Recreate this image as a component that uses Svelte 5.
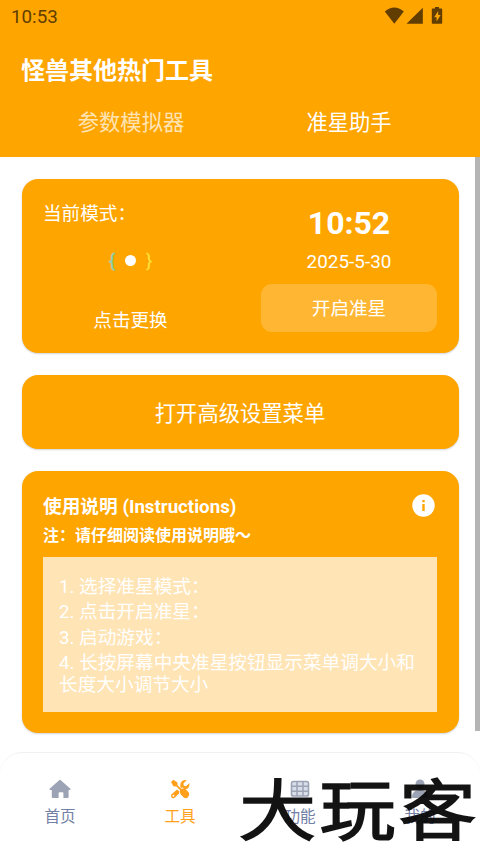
<script lang="ts">
  const topTabs = ['参数模拟器', '准星助手'];
  let activeTop = $state(1);

  const steps = [
    '1. 选择准星模式：',
    '2. 点击开启准星：',
    '3. 启动游戏：',
    '4. 长按屏幕中央准星按钮显示菜单调大小和长度大小调节大小',
  ];

  const navItems = [
    { id: 'home', label: '首页' },
    { id: 'tools', label: '工具' },
    { id: 'features', label: '功能' },
    { id: 'me', label: '我的' },
  ];
  let activeNav = $state('tools');
</script>

<div class="screen">
  <header>
    <div class="status">
      <span>10:53</span>
      <svg width="60" height="20" viewBox="0 0 60 20" fill="#613d00">
        <path d="M0.8 4.4Q10.3 -3.6 19.8 4.4L10.3 16.8Z" />
        <path d="M22.5 16.8L38.8 0.8V16.8Z" />
        <path d="M51 0h4v1.400h2.400q.8 0 .8.8v13.800q0 .8-.8.8h-8.800q-.8 0-.8-.8V2.200q0-.8.8-.8H51Z" />
        <path d="M54.200 4l-4 6.200h2.400v4.200l4-6.400h-2.400Z" fill="#ffa500" />
      </svg>
    </div>
    <h1>怪兽其他热门工具</h1>
    <div class="tabs">
      {#each topTabs as tab, i}
        <button class:active={activeTop === i} onclick={() => (activeTop = i)}>{tab}</button>
      {/each}
    </div>
  </header>

  <main>
    <div class="content">
      <section class="card mode">
        <div class="picker">
          <span class="label">当前模式：</span>
          <div class="crosshair">
            <span class="left">&#123;</span>
            <i></i>
            <span class="right">&#125;</span>
          </div>
          <span class="change">点击更换</span>
        </div>
        <div class="clock">
          <strong>10:52</strong>
          <span class="date">2025-5-30</span>
          <button class="start">开启准星</button>
        </div>
      </section>

      <button class="card advanced">打开高级设置菜单</button>

      <section class="card help">
        <div class="help-head">
          <h2>使用说明 (Instructions)</h2>
          <svg width="23" height="23" viewBox="0 0 23 23">
            <circle cx="11.5" cy="11.5" r="11.2" fill="#fff" />
            <path d="M10.300 6h2.400v2.200h-2.400ZM10.300 10h2.400v7h-2.400Z" fill="#ffa500" />
          </svg>
        </div>
        <p class="note">注：请仔细阅读使用说明哦～</p>
        <div class="steps">
          {#each steps as step}
            <p>{step}</p>
          {/each}
        </div>
      </section>
    </div>
    <div class="scrollbar"></div>
  </main>

  <nav>
    {#each navItems as item}
      <button class:active={activeNav === item.id} onclick={() => (activeNav = item.id)}>
        <svg width="24" height="22" viewBox="0 0 24 22" fill="currentColor">
          {#if item.id === 'home'}
            <path d="M11.200 1.200q.8-.7 1.600 0l9.600 8.600q.6 1-.4 1.200h-1.400v7.100q0 1-1 1h-4.200v-4.800q0-1-1-1h-2.800q-1 0-1 1v4.800H4.800q-1 0-1-1v-7.100H2q-1-.2-.4-1.200Z" />
          {:else if item.id === 'tools'}
            <path d="M3 3L5.400 .8L9.400 3.400L9.600 6.200L13.200 9.800Q16 8.800 18 10.600L21 13.800Q21.800 16.200 20 18.200Q17.800 20 15.800 18.400L12.600 15.200Q11.200 13.200 12 11L8.400 7.600L5.400 7.200Z" />
            <path d="M18.700 1.200L15.400 4.400L15.800 6.800L18.200 7.200L21.400 4Q22 9.200 17.800 10.200L16.600 10.300L14.200 8.200L12.800 9.400Q11.200 3.800 14.600 1.800Q16.600 .6 18.700 1.200Z" />
            <path d="M9 10.400L11.300 12.600L11 14.600L7 18.600Q5 20 3.600 18.400Q2.400 16.800 3.600 15.200Z" />
            <circle cx="5.400" cy="16.800" r="1" fill="#fff" />
          {:else if item.id === 'features'}
            <rect x="3.500" y="2.500" width="17" height="14.500" rx="1.800" fill="#d9dee8" stroke="currentColor" stroke-width="1.600" />
            <path d="M3 7.200h18M3 12.200h18M9 2.500v14.500M15 2.500v14.500" fill="none" stroke="currentColor" stroke-width="1.500" />
          {:else}
            <circle cx="12" cy="5" r="4.500" />
            <path d="M4 18q0-7 8-7t8 7q0 1-1 1H5q-1 0-1-1Z" />
          {/if}
        </svg>
        <span>{item.label}</span>
      </button>
    {/each}
  </nav>

  <div class="watermark">大玩客</div>
</div>

<style>
  :global(body) { background: #fff; }
  .screen {
    position: relative;
    display: flex;
    flex-direction: column;
    width: 480px;
    height: 853px;
    overflow: hidden;
    color: #fff;
    font-family: Roboto, "Noto Sans CJK SC", sans-serif;
  }
  button { padding: 0; border: 0; background: none; color: inherit; font: inherit; }
  h1, h2, p { margin: 0; }
  svg { display: block; }

  header { height: 157px; box-sizing: border-box; background: #ffa500; }
  .status {
    display: flex;
    justify-content: space-between;
    height: 34px;
    padding: 7px 36px 0 11px;
    box-sizing: border-box;
    color: #613d00;
    font-size: 18.8px;
    line-height: 20px;
  }
  h1 { margin: 19px 21px 0; font-size: 24px; font-weight: 700; line-height: 36px; }
  .tabs { display: grid; grid-template-columns: 1fr 1fr; margin: 16px 22px 0; }
  .tabs button { height: 36px; font-size: 21.3px; line-height: 36px; opacity: 0.7; }
  .tabs button.active { opacity: 1; }

  main { flex: 1; display: flex; min-height: 0; }
  .content { flex: 1; display: flex; flex-direction: column; gap: 22px; padding: 21.500px 16.500px 0 21.500px; }
  .scrollbar { width: 5px; height: 574px; background: #b5b5b5; }
  .card { flex: none; box-sizing: border-box; border-radius: 16px; background: #ffa500; box-shadow: 0 1px 2px rgba(40, 60, 100, 0.22); }

  .mode { display: grid; grid-template-columns: 175px 176px; justify-content: space-between; height: 174.500px; padding: 21px 21.500px; }
  .picker { display: flex; flex-direction: column; font-size: 18.600px; line-height: 28px; }
  .crosshair { display: flex; align-items: center; justify-content: center; gap: 10px; height: 28px; margin-top: 19px; line-height: 20px; }
  .crosshair i { width: 11px; height: 11px; border-radius: 50%; background: #fff; }
  .crosshair .left { color: #8fcfae; -webkit-text-stroke: 0.5px #8fcfae; }
  .crosshair .right { color: #ffe23c; }
  .change { margin-top: 32px; text-align: center; }
  .clock { display: flex; flex-direction: column; align-items: center; }
  .clock strong { margin-top: 4px; font-size: 32px; line-height: 38px; }
  .date { margin-top: 8px; font-size: 18.900px; line-height: 24px; }
  .start { width: 100%; height: 48px; margin-top: 10px; padding-top: 2px; border-radius: 11px; background: #ffb733; font-size: 18.600px; line-height: 46px; }

  .advanced { height: 74px; padding-bottom: 2px; font-size: 21.300px; }

  .help { height: 262px; padding: 23px 21.500px; }
  .help-head { display: flex; align-items: center; justify-content: space-between; height: 26px; padding-right: 2px; }
  .help-head svg { margin-top: -3px; }
  h2 { font-size: 18.700px; font-weight: 700; line-height: 26px; }
  .note { margin-top: 4px; font-size: 16px; font-weight: 700; line-height: 24px; }
  .steps { height: 155px; margin-top: 9px; padding: 17px 16px 0; box-sizing: border-box; background: #ffe4b5; font-size: 18.660px; line-height: 22px; }
  .steps p { padding: 2px 0 1.400px; }

  nav {
    display: grid;
    grid-template-columns: repeat(4, 1fr);
    height: 101px;
    box-sizing: border-box;
    border-top: 1px solid #f0f0f0;
    border-radius: 22px 22px 0 0;
    background: #fff;
  }
  nav button { display: flex; flex-direction: column; align-items: center; padding-top: 26px; color: #9ca3b5; font-size: 15.600px; line-height: 22px; }
  nav span { margin-top: 5px; color: #7280a5; }
  nav .active, nav .active span { color: #ff9f1a; }

  .watermark {
    position: absolute;
    left: 240px;
    top: 766px;
    color: #050505;
    font-family: "Noto Sans CJK SC", sans-serif;
    font-size: 75px;
    font-weight: 300;
    letter-spacing: 5px;
    line-height: 80px;
    white-space: nowrap;
    opacity: 0.94;
    transform: scaleY(0.87);
    -webkit-text-stroke: 3.6px #050505;
    stroke-linejoin: round;
    pointer-events: none;
  }
</style>
